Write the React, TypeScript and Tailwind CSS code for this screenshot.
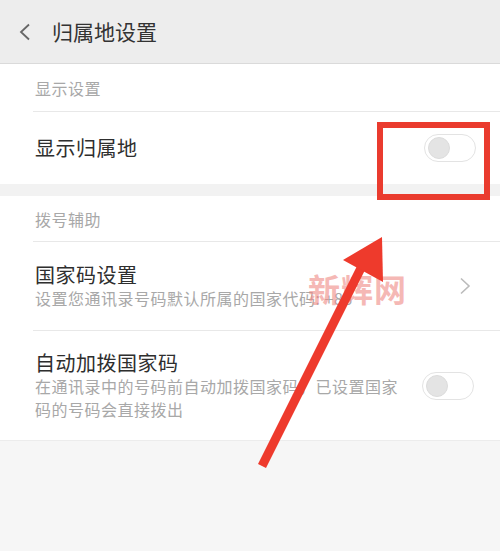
import React from "react";

const font = { fontFamily: '"Noto Sans CJK SC", "Noto Sans", sans-serif' };

function Toggle() {
  return (
    <div className="w-[52px] h-[28px] rounded-full border border-[#e3e3e3] bg-white flex items-center px-[3px] shrink-0">
      <div className="w-[22px] h-[22px] rounded-full bg-[#e4e4e4] border border-[#dcdcdc]" />
    </div>
  );
}

function Chevron({ dir }: { dir: "left" | "right" }) {
  return (
    <svg width="14" height="18" viewBox="0 0 14 18" fill="none">
      {dir === "left" ? (
        <path d="M11 1.5 L3 9 L11 16.5" stroke="#666" strokeWidth="1.8" />
      ) : (
        <path d="M3 1.5 L11 9 L3 16.5" stroke="#bbb" strokeWidth="1.6" />
      )}
    </svg>
  );
}

export default function App() {
  return (
    <div className="relative w-[500px] h-[551px] bg-[#f6f6f6] overflow-hidden" style={font}>
      {/* header */}
      <div className="h-[64px] bg-[#ededed] border-b border-[#dadada] flex items-center pl-[18px]">
        <Chevron dir="left" />
        <div className="ml-[20px] text-[21px] text-[#333]">归属地设置</div>
      </div>

      {/* 显示设置 */}
      <div className="bg-white">
        <div className="h-[47px] flex items-center pl-[35px] text-[16px] tracking-[0.5px] text-[#a8a8a8]">显示设置</div>
        <div className="ml-[33px] border-t border-[#e8e8e8]" />
        <div className="h-[72px] flex items-center justify-between pl-[35px] pr-[24px]">
          <div className="text-[20px] tracking-[0.5px] text-[#2e2e2e]">显示归属地</div>
          <Toggle />
        </div>
      </div>

      <div className="h-[12px] bg-[#f2f2f2]" />

      {/* 拨号辅助 */}
      <div className="bg-white border-b border-[#ececec]">
        <div className="h-[45px] flex items-center pl-[35px] text-[16px] tracking-[0.5px] text-[#a8a8a8]">拨号辅助</div>
        <div className="ml-[33px] border-t border-[#e8e8e8]" />
        <div className="h-[88px] flex items-center justify-between pl-[35px] pr-[28px]">
          <div>
            <div className="text-[20px] leading-[25px] tracking-[0.5px] text-[#2e2e2e]">国家码设置</div>
            <div className="text-[16px] leading-[23px] tracking-[0.5px] text-[#a8a8a8]">设置您通讯录号码默认所属的国家代码: +86</div>
          </div>
          <Chevron dir="right" />
        </div>
        <div className="ml-[33px] border-t border-[#e8e8e8]" />
        <div className="h-[109px] flex items-center justify-between pl-[35px] pr-[26px]">
          <div className="w-[372px]">
            <div className="text-[20px] leading-[25px] tracking-[0.5px] text-[#2e2e2e]">自动加拨国家码</div>
            <div className="text-[16px] leading-[23px] tracking-[0.5px] text-[#a8a8a8]">
              在通讯录中的号码前自动加拨国家码，已设置国家码的号码会直接拨出
            </div>
          </div>
          <Toggle />
        </div>
      </div>

      {/* watermark */}
      <div className="absolute left-[308px] top-[272px] text-[32px] font-bold leading-none tracking-[1px] text-[#f08a84] opacity-60">
        新辉网
      </div>

      {/* highlight box */}
      <div className="absolute left-[377px] top-[122px] w-[113px] h-[78px] border-[6px] border-[#ea3b2e]" />

      {/* arrow */}
      <svg className="absolute left-0 top-0" width="500" height="551" viewBox="0 0 500 551">
        <line x1="262" y1="466" x2="364" y2="262" stroke="#ee3a2c" strokeWidth="9" />
        <polygon points="343,260 382,237 383,282" fill="#ee3a2c" />
      </svg>
    </div>
  );
}
